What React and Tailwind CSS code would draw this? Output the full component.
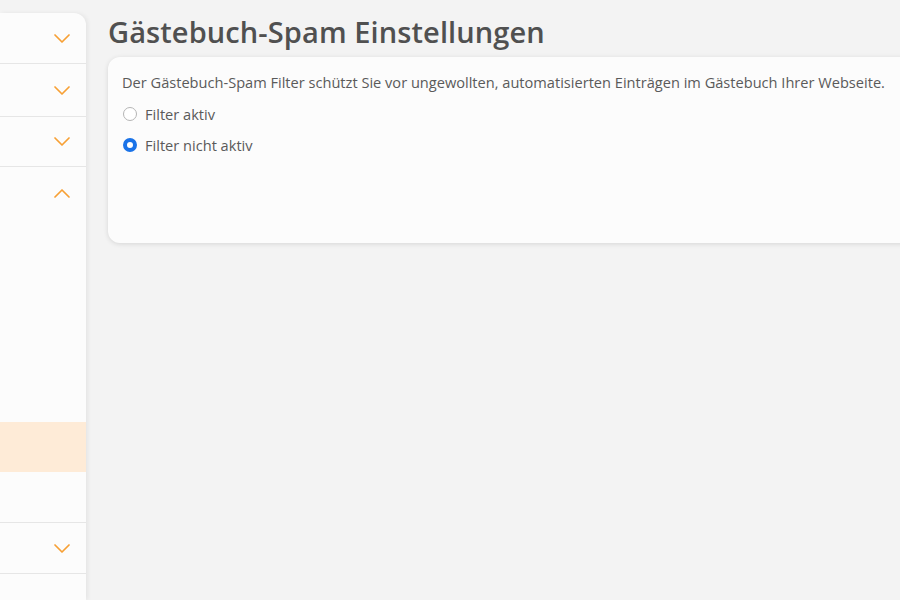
import React from "react";

const Chevron = ({ up }) => (
  <svg width="16" height="9" viewBox="0 0 16 9" fill="none" className="shrink-0">
    <path
      d={up ? "M1 8 L8 1 L15 8" : "M1 1 L8 8 L15 1"}
      stroke="#f7a035"
      strokeWidth="1.7"
      strokeLinecap="round"
      strokeLinejoin="round"
    />
  </svg>
);

const Row = ({ h, up, children }) => (
  <div className={`flex items-center justify-end pr-4 border-b border-[#e6e6e6] ${h}`}>
    <Chevron up={up} />
    {children}
  </div>
);

export default function App() {
  return (
    <div
      className="flex w-[900px] h-[600px] overflow-hidden bg-[#f3f3f3] text-[#555]"
      style={{ fontFamily: '"Open Sans", "Noto Sans", sans-serif' }}
    >
      <aside className="w-[86px] shrink-0 mt-[13px] bg-[#fcfcfc] rounded-tr-xl shadow-[2px_0_4px_rgba(0,0,0,0.06)]">
        <Row h="h-[51px]" />
        <Row h="h-[53px]" />
        <Row h="h-[50px]" />
        <div className="border-b border-[#e6e6e6]">
          <div className="flex items-center justify-end pr-4 h-[52px]">
            <Chevron up />
          </div>
          <div className="h-[203px]" />
          <div className="h-[50px] bg-[#feebd7]" />
          <div className="h-[50px]" />
        </div>
        <Row h="h-[51px]" />
      </aside>

      <main className="flex-1 pl-[22px] pt-[14px]">
        <h1 className="text-[29px] leading-[36px] font-semibold text-[#505050] tracking-[0.1px]">
          Gästebuch-Spam Einstellungen
        </h1>
        <section className="mt-[7px] h-[186px] w-[820px] bg-[#fcfcfc] rounded-xl shadow-[0_1px_5px_rgba(0,0,0,0.12)] px-[14px] pt-[14px]">
          <p className="text-[14.6px] leading-[22px] text-[#5a5a5a]">
            Der Gästebuch-Spam Filter schützt Sie vor ungewollten, automatisierten Einträgen im Gästebuch Ihrer Webseite.
          </p>
          <div className="mt-[10px] flex flex-col gap-[9px] text-[14.6px] leading-[22px] text-[#5a5a5a]">
            <label className="flex items-center gap-[8px]">
              <span className="w-[14px] h-[14px] rounded-full border border-[#b5b5b5] bg-white ml-[1px]" />
              Filter aktiv
            </label>
            <label className="flex items-center gap-[8px]">
              <span className="w-[14px] h-[14px] rounded-full border-[4px] border-[#1a73e8] bg-white ml-[1px]" />
              Filter nicht aktiv
            </label>
          </div>
        </section>
      </main>
    </div>
  );
}
